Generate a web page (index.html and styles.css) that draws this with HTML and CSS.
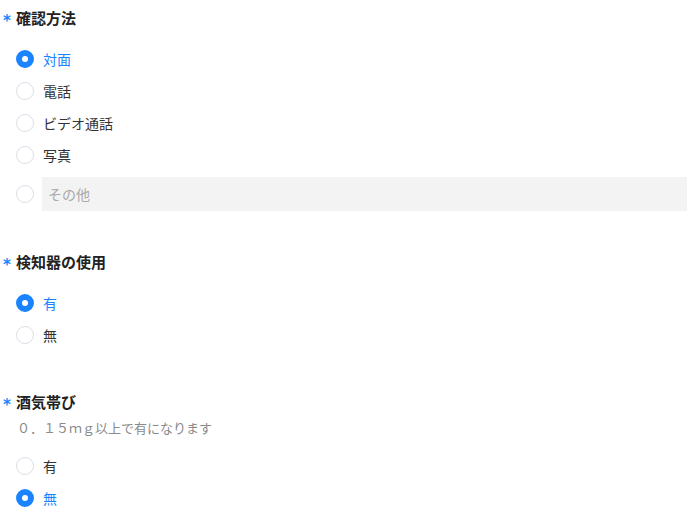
FILE: index.html
```html
<!DOCTYPE html>
<html lang="ja">
<head>
    <meta charset="UTF-8">
    <title>確認フォーム</title>
    <link rel="stylesheet" href="styles.css">
</head>
<body>
    <div class="form">
        <div class="field">
            <div class="field-title"><span class="required">*</span>確認方法</div>
            <div class="options">
                <label class="radio checked"><span class="dot"></span><span class="text">対面</span></label>
                <label class="radio"><span class="dot"></span><span class="text">電話</span></label>
                <label class="radio"><span class="dot"></span><span class="text">ビデオ通話</span></label>
                <label class="radio"><span class="dot"></span><span class="text">写真</span></label>
                <label class="radio other"><span class="dot"></span><input class="other-input" type="text" placeholder="その他"></label>
            </div>
        </div>

        <div class="field">
            <div class="field-title"><span class="required">*</span>検知器の使用</div>
            <div class="options">
                <label class="radio checked"><span class="dot"></span><span class="text">有</span></label>
                <label class="radio"><span class="dot"></span><span class="text">無</span></label>
            </div>
        </div>

        <div class="field">
            <div class="field-title"><span class="required">*</span>酒気帯び</div>
            <div class="hint">０．１５ｍｇ以上で有になります</div>
            <div class="options tight">
                <label class="radio"><span class="dot"></span><span class="text">有</span></label>
                <label class="radio checked"><span class="dot"></span><span class="text">無</span></label>
            </div>
        </div>
    </div>
</body>
</html>
```

FILE: styles.css
```css
:root {
    --primary: #1a84ff;
    --text: #333333;
    --title: #222222;
    --muted: #8a8a8a;
    --border: #dcdfe6;
    --input-bg: #f3f3f3;
}

* {
    box-sizing: border-box;
    margin: 0;
    padding: 0;
}

body {
    font-family: "Noto Sans CJK JP", "Noto Sans", sans-serif;
    color: var(--text);
    background-color: #ffffff;
}

.form {
    padding: 5px 13px 0 16px;
}

.field + .field {
    margin-top: 38px;
}

.field-title {
    display: flex;
    align-items: center;
    height: 24px;
    font-size: 15px;
    font-weight: 700;
    color: var(--title);
}

.required {
    width: 14px;
    margin-left: -14px;
    padding-left: 1px;
    padding-top: 8px;
    font-family: "DejaVu Sans", sans-serif;
    font-size: 15px;
    line-height: 1;
    font-weight: 700;
    color: var(--primary);
}

.hint {
    margin-top: 5px;
    padding-left: 1px;
    font-size: 13px;
    line-height: 20px;
    color: var(--muted);
}

.options {
    margin-top: 14px;
    display: flex;
    flex-direction: column;
}

.options.tight {
    margin-top: 12px;
}

.radio {
    display: flex;
    align-items: center;
    height: 32px;
    font-size: 14px;
    cursor: pointer;
}

.dot {
    width: 18px;
    height: 18px;
    flex-shrink: 0;
    border: 1px solid var(--border);
    border-radius: 50%;
    background-color: #ffffff;
}

.radio .text {
    margin-left: 9px;
}

.radio.checked .dot {
    border: 6px solid var(--primary);
}

.radio.checked .text {
    color: var(--primary);
}

.radio.other {
    height: 34px;
    margin-top: 6px;
}

.other-input {
    flex: 1;
    height: 34px;
    margin-left: 8px;
    padding: 0 6px;
    border: none;
    outline: none;
    background-color: var(--input-bg);
    font-family: inherit;
    font-size: 14px;
    color: var(--text);
}

.other-input::placeholder {
    color: #a8a8a8;
}
```
